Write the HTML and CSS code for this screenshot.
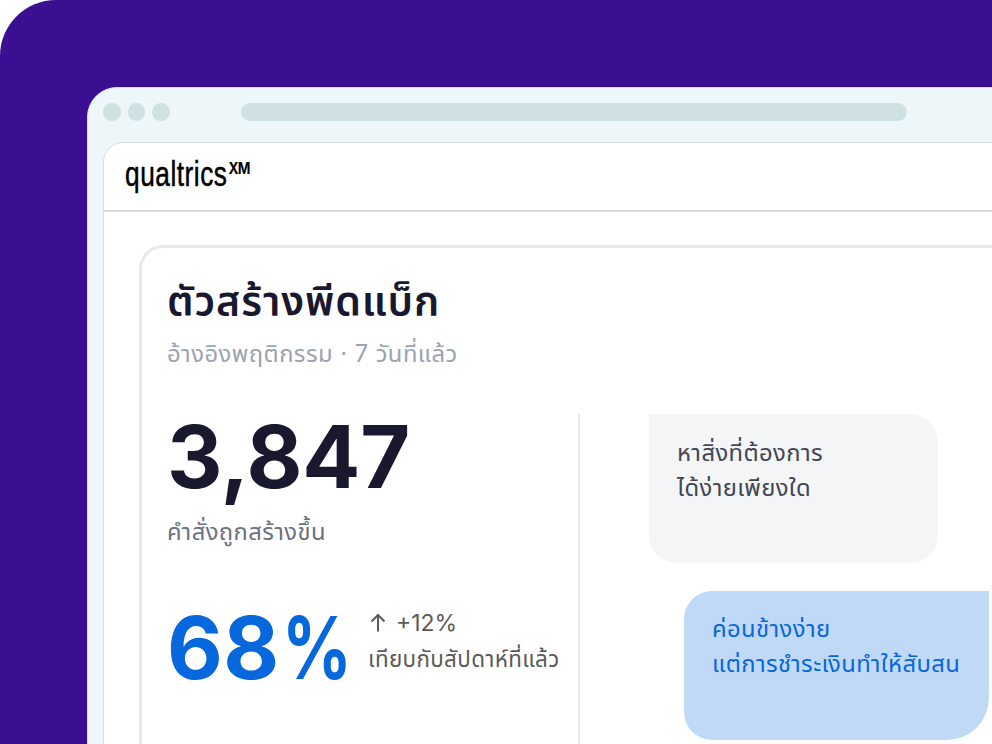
FILE: index.html
```html
<!DOCTYPE html>
<html lang="th">
<head>
    <meta charset="UTF-8">
    <title>Qualtrics XM</title>
    <link rel="stylesheet" href="styles.css">
</head>
<body>
    <div class="stage">
        <div class="browser">
            <div class="toolbar">
                <span class="dot"></span>
                <span class="dot"></span>
                <span class="dot"></span>
                <span class="address"></span>
            </div>
            <div class="page">
                <div class="header">
                    <svg class="logo" width="130" height="50" viewBox="0 0 130 50">
                        <text class="logo-name" x="0" y="29" textLength="102.500" lengthAdjust="spacingAndGlyphs">qualtrics</text>
                        <text class="logo-xm" x="103.500" y="16.500" textLength="21" lengthAdjust="spacingAndGlyphs">XM</text>
                    </svg>
                </div>
                <div class="card">
                    <h1>ตัวสร้างพีดแบ็ก</h1>
                    <p class="subtitle">อ้างอิงพฤติกรรม · 7 วันที่แล้ว</p>
                    <div class="content">
                        <div class="stats">
                            <div class="number">3,847</div>
                            <div class="label">คำสั่งถูกสร้างขึ้น</div>
                            <div class="score">
                                <div class="percent">68<span class="sign">%</span></div>
                                <div class="change">
                                    <div class="delta">
                                        <svg width="20" height="22" viewBox="0 0 20 22"><path d="M10 19.500V3M3.500 9.500L10 3L16.500 9.500"/></svg>
                                        <span>+12%</span>
                                    </div>
                                    <div class="compare">เทียบกับสัปดาห์ที่แล้ว</div>
                                </div>
                            </div>
                        </div>
                        <div class="chat">
                            <div class="bubble question">หาสิ่งที่ต้องการ<br>ได้ง่ายเพียงใด</div>
                            <div class="bubble answer">ค่อนข้างง่าย<br>แต่การชำระเงินทำให้สับสน</div>
                        </div>
                    </div>
                </div>
            </div>
        </div>
    </div>
</body>
</html>
```
FILE: styles.css
```css
* {
    box-sizing: border-box;
}

body {
    margin: 0;
    width: 992px;
    height: 744px;
    overflow: hidden;
    background: #ffffff;
    font-family: Inter, "Noto Sans Thai", "Noto Sans", sans-serif;
}

.stage {
    height: 744px;
    padding: 87px 0 0 87px;
    background: #3b0f91;
    border-top-left-radius: 56px;
    overflow: hidden;
}

.browser {
    width: 1000px;
    height: 700px;
    padding-left: 15px;
    background: #edf6f9;
    border: 1px solid #d3dfe8;
    border-radius: 30px 0 0 0;
}

.toolbar {
    display: flex;
    align-items: center;
    gap: 7px;
    height: 54px;
    padding-bottom: 6px;
}

.dot {
    width: 17.6px;
    height: 17.6px;
    border-radius: 50%;
    background: #d0e1e3;
}

.address {
    width: 666px;
    height: 18px;
    margin-left: 64px;
    border-radius: 9px;
    background: #d0e1e3;
}

.page {
    width: 1000px;
    height: 640px;
    background: #ffffff;
    border: 1px solid #d5dfe2;
    border-radius: 20px 0 0 0;
}

.header {
    height: 69px;
    padding: 14px 0 0 21px;
    border-bottom: 2px solid #d6d9dc;
}

.logo {
    display: block;
    overflow: visible;
}

.logo-name {
    font-family: "Liberation Sans Narrow", "Liberation Sans", sans-serif;
    font-size: 35px;
    letter-spacing: 0.7px;
    stroke: #000000;
    stroke-width: 0.5;
}

.logo-xm {
    font-family: Inter, sans-serif;
    font-size: 16px;
    font-weight: 700;
    letter-spacing: -1px;
}

.card {
    width: 1000px;
    height: 600px;
    margin: 33px 0 0 35px;
    padding: 26px 0 0 25px;
    border: 3px solid #e7e9ea;
    border-radius: 24px 0 0 0;
}

h1 {
    margin: 0;
    height: 54px;
    font-size: 41px;
    line-height: 54px;
    font-weight: 600;
    letter-spacing: 0.9px;
    color: #1a182e;
    white-space: nowrap;
}

.subtitle {
    margin: 8px 0 0;
    height: 36px;
    font-size: 23.8px;
    line-height: 36px;
    letter-spacing: 0.45px;
    color: #9ca3af;
}

.content {
    display: flex;
    margin-top: 42px;
}

.stats {
    width: 413px;
    height: 340px;
    border-right: 2px solid #e7e9ea;
}

.number,
.percent {
    font-size: 86px;
    font-weight: 700;
    line-height: 87px;
    letter-spacing: -0.2px;
    color: #1a182e;
}

.label {
    margin-top: 13px;
    font-size: 23.8px;
    line-height: 36px;
    letter-spacing: 0.4px;
    color: #6b7280;
}

.score {
    display: flex;
    margin-top: 55px;
}

.percent {
    width: 202px;
    letter-spacing: 0.5px;
    white-space: nowrap;
    color: #0768dd;
}

.sign {
    display: inline-block;
    width: 70px;
    margin-left: 2px;
    transform: scaleX(0.8);
    transform-origin: left;
}

.change {
    margin-left: -1px;
    font-size: 23px;
    line-height: 36px;
    color: #5a5a5a;
    white-space: nowrap;
}

.compare {
    font-size: 22.4px;
    letter-spacing: 0.35px;
}

.delta {
    display: flex;
    align-items: center;
    gap: 8px;
}

.delta svg {
    fill: none;
    stroke: #5a5a5a;
    stroke-width: 2;
}

.chat {
    padding-left: 69px;
}

.bubble {
    padding: 21px 28px;
    height: 149px;
    font-size: 23.8px;
    line-height: 35px;
    letter-spacing: 0.4px;
    white-space: nowrap;
}

.question {
    width: 289px;
    border-radius: 0 28px 28px 28px;
    background: #f3f5f7;
    color: #414652;
}

.answer {
    width: 305px;
    margin: 28px 0 0 35px;
    padding-top: 20px;
    border-radius: 28px 0 42px 28px;
    background: #c0d9f7;
    color: #0768dd;
}
```
